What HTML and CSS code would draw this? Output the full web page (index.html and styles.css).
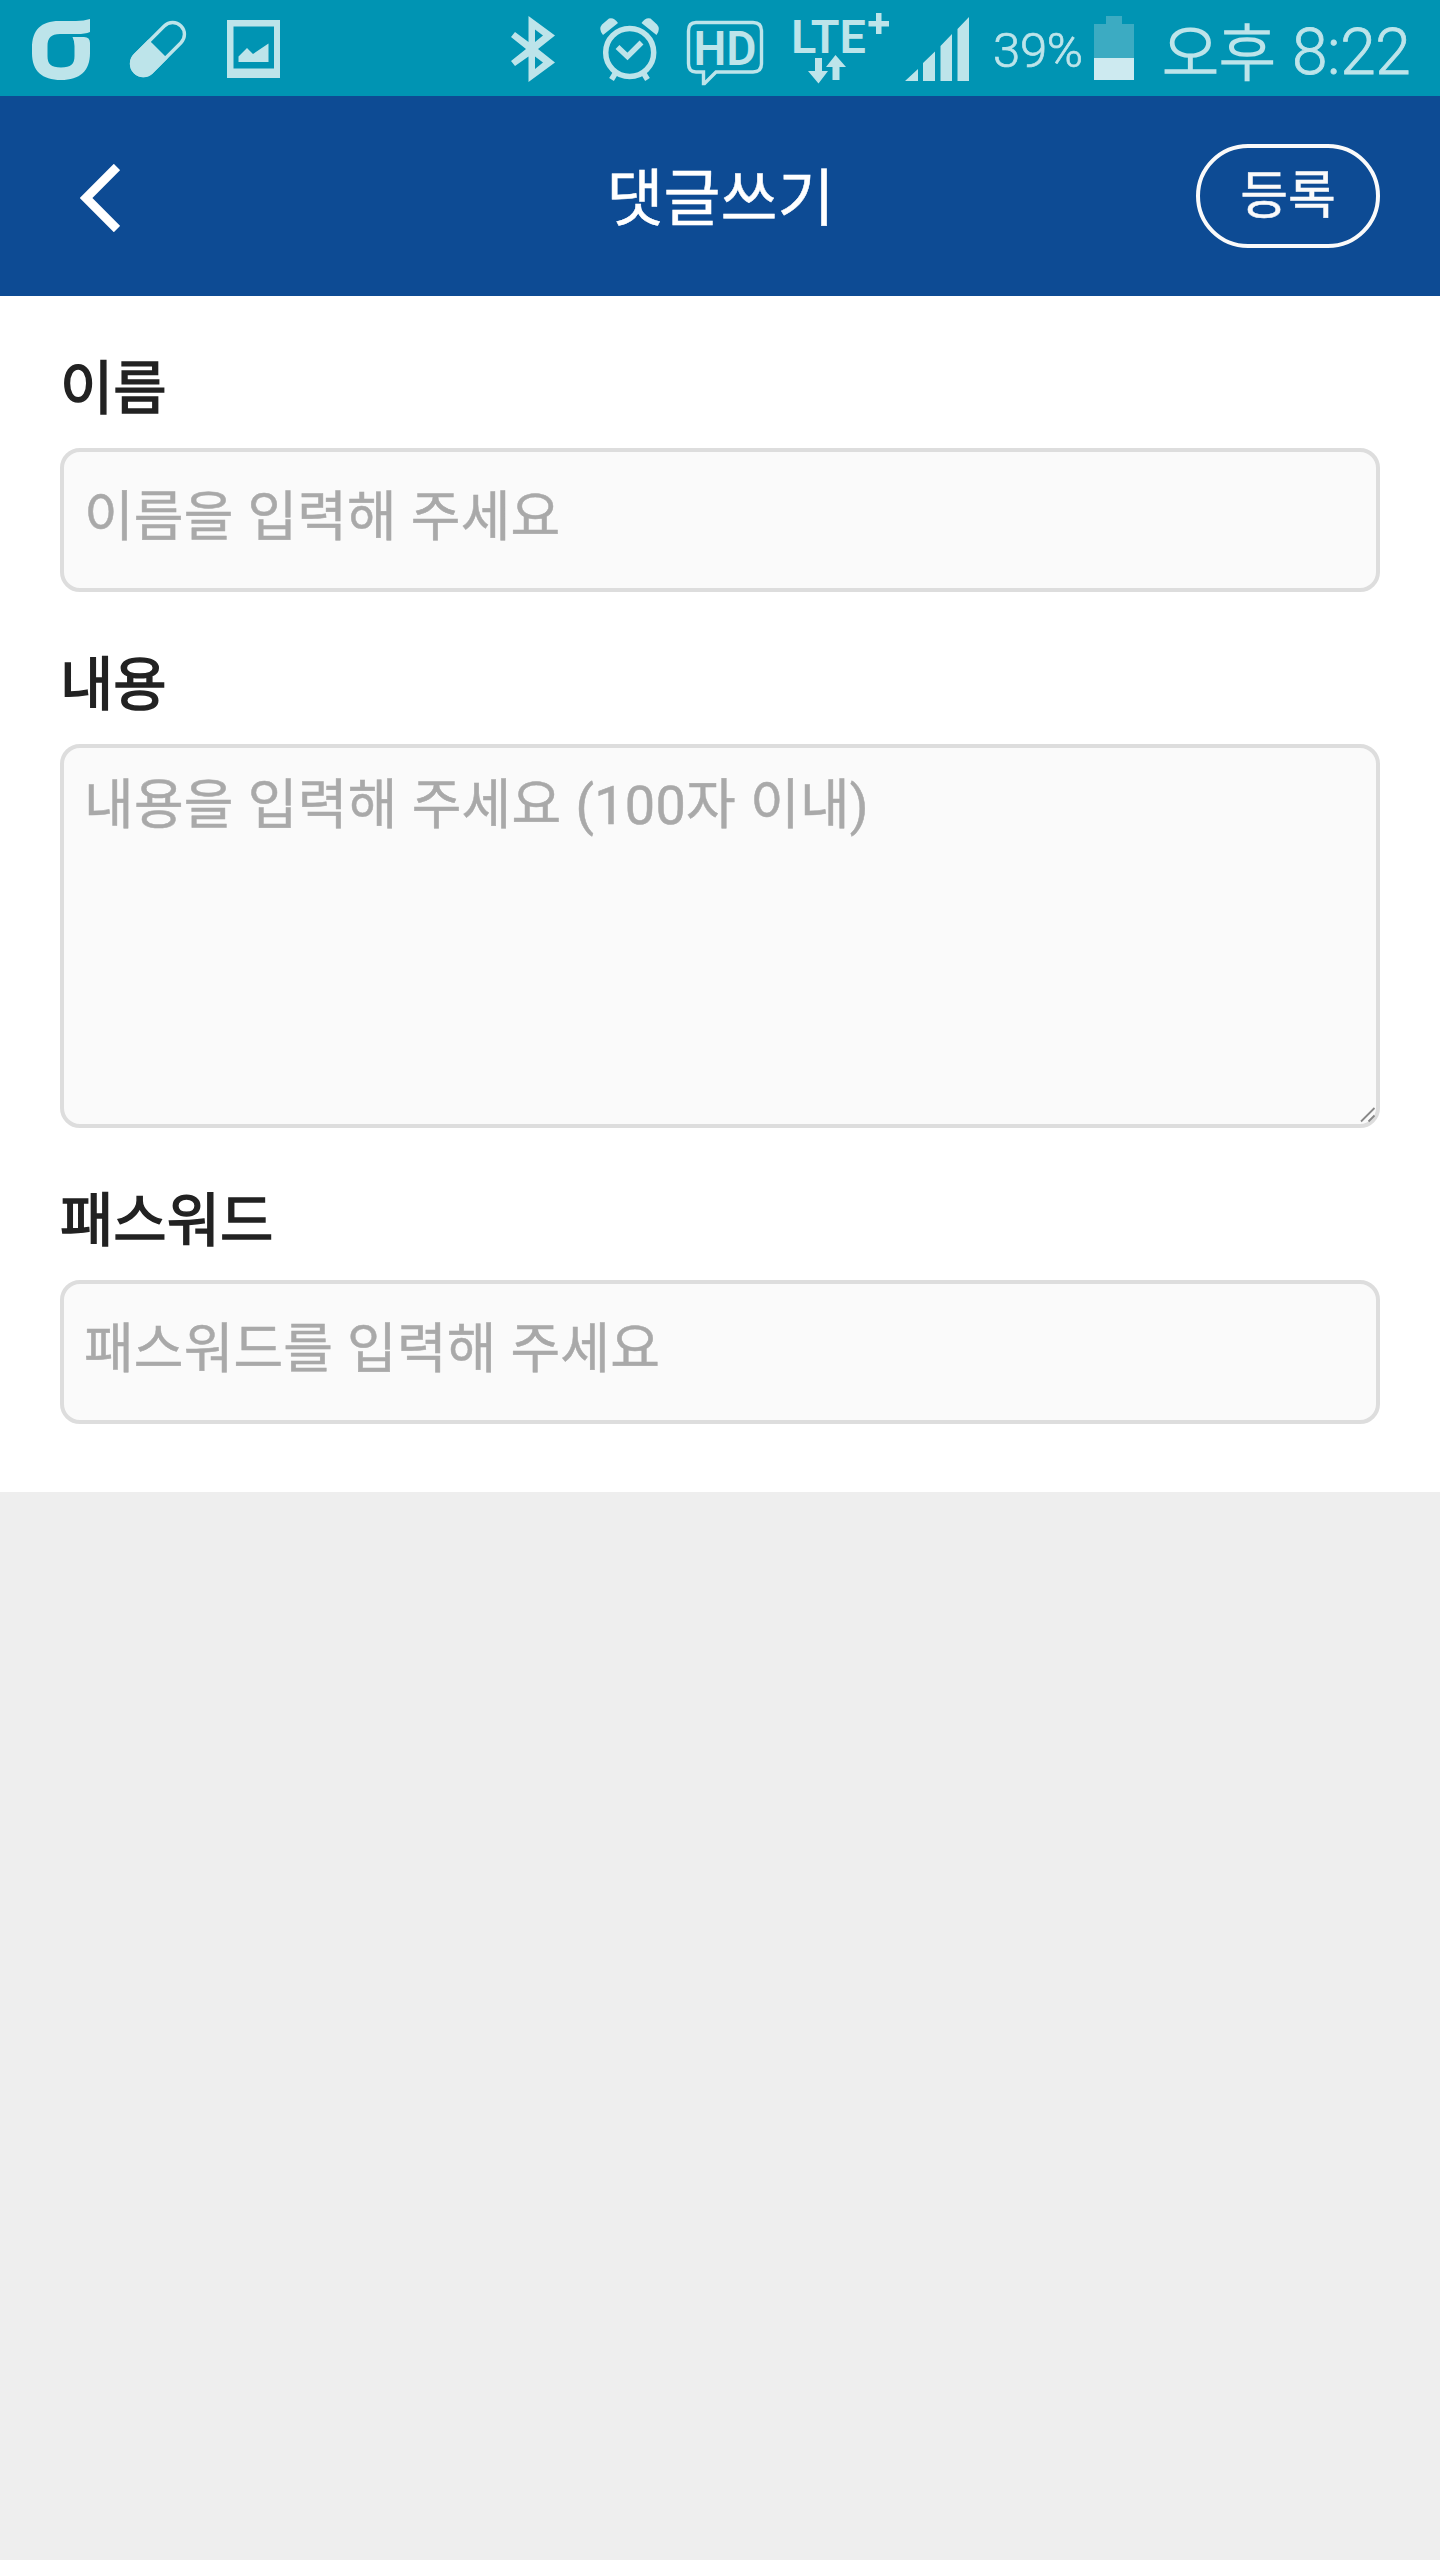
FILE: index.html
```html
<!DOCTYPE html>
<html lang="ko">
<head>
    <meta charset="UTF-8">
    <meta name="viewport" content="width=device-width, initial-scale=1.0">
    <title>댓글쓰기</title>
    <link rel="stylesheet" href="styles.css">
</head>
<body>
    <div class="status-bar">
        <div class="status-left">
            <svg class="icon" width="58" height="96" viewBox="32 0 58 96">
                <path fill-rule="evenodd" d="M90 19V32Q85 34 77 34H60C51 34 47.500 38 47.500 46V56C47.500 64 51 67.500 61 67.500S74.500 64 74.500 56V46Q74.500 41 72.500 37H84Q90 37 90 43V53C90 71 80 80 61 80S32 71 32 53V48C32 30 41 21 59 21H76Q84 21 90 19Z"/>
            </svg>
            <svg class="icon" width="56" height="96" viewBox="130 0 56 96">
                <g transform="rotate(45 158 49)">
                    <rect class="line" x="146.200" y="16.500" width="23.600" height="65" rx="11.800" stroke-width="3.400"/>
                    <path d="M144.500 49H171.500V69.700A13.500 13.500 0 0 1 144.500 69.700Z"/>
                </g>
            </svg>
            <svg class="icon picture" width="53" height="96" viewBox="227 0 53 96">
                <path fill-rule="evenodd" d="M227 20H280V78H227ZM233.500 26.500V68.500H274V26.500Z"/>
                <path d="M238.500 62V56.500L247 48L253 54L268.500 43.500V62Z"/>
            </svg>
        </div>
        <div class="status-right">
            <svg class="icon bluetooth" width="44" height="96" viewBox="511 0 44 96">
                <path fill-rule="evenodd" d="M528.500 16L555 35.500L538 49L555 62.500L528.500 82V56.500L515 66L511 61L526 49L511 37L515 32L528.500 42ZM535 29.500V42L543 35.500ZM535 56.500V69L543 62.500Z"/>
            </svg>
            <svg class="icon alarm" width="59" height="96" viewBox="600 0 59 96">
                <circle class="line" cx="629.700" cy="52.500" r="24" stroke-width="5.500"/>
                <path class="line" d="M617.500 47L627.500 56.500L641.500 42.500" stroke-width="5.500"/>
                <path class="line" d="M615.500 73L611.500 79.500M643.500 73L647.500 79.500" stroke-width="5.500"/>
                <path d="M603 35L618 23Q614 17 609 18.500L602 24.500Q598 29 603 35ZM656.500 35L641.500 23Q645.500 17 650.500 18.500L657 24.500Q661 29 656.500 35Z"/>
            </svg>
            <svg class="icon hd" width="76" height="96" viewBox="687 0 76 96">
                <path class="line" d="M696 22.500H753Q761.500 22.500 761.500 31V63.500Q761.500 72 753 72H716L704.500 83.500H703.500V72H696Q688.500 72 688.500 63.500V31Q688.500 22.500 696 22.500Z" stroke-width="3.400"/>
                <text x="693.500" y="65" font-size="48" font-weight="600" textLength="63" lengthAdjust="spacingAndGlyphs">HD</text>
            </svg>
            <svg class="icon lte" width="96" height="96" viewBox="794 0 96 96">
                <text x="791" y="53" font-size="46" font-weight="600" textLength="75" lengthAdjust="spacingAndGlyphs">LTE</text>
                <path d="M876 13H881.500V21H889V26.500H881.500V34H876V26.500H868.500V21H876Z"/>
                <path d="M815 58H822V71H828L818.500 83.500L808 71H815ZM835.500 55L846 67H839.500V80H832.500V67H826Z"/>
            </svg>
            <svg class="icon signal" width="64" height="96" viewBox="905 0 64 96">
                <path d="M905 81L918 69V81ZM923 81V63L935 51.500V81ZM940.500 81V46L952 34V81ZM957.500 81V29L969 17V81Z"/>
            </svg>
            <span class="percent">39%</span>
            <svg class="icon battery" width="40" height="96" viewBox="1094 0 40 96">
                <path class="empty" d="M1094 24H1106V16H1122V24H1134V58H1094Z"/>
                <path class="full" d="M1094 58H1134V80H1094Z"/>
            </svg>
            <span class="time"><span class="ampm">오후</span>8:22</span>
        </div>
    </div>

    <header class="header">
        <button class="back" type="button" aria-label="뒤로">
            <svg width="40" height="68" viewBox="0 0 40 68">
                <path d="M37 3L6 34L37 65" fill="none" stroke="#fff" stroke-width="9"/>
            </svg>
        </button>
        <h1>댓글쓰기</h1>
        <button class="submit" type="submit" form="replyForm">등록</button>
    </header>

    <form class="reply-form" id="replyForm">
        <label for="name">이름</label>
        <input type="text" id="name" name="name" placeholder="이름을 입력해 주세요">

        <label for="content">내용</label>
        <div class="textarea-wrap">
            <textarea id="content" name="content" maxlength="100" placeholder="내용을 입력해 주세요 (100자 이내)"></textarea>
            <svg class="grip" width="16" height="16" viewBox="0 0 16 16">
                <path d="M1 14.500L14.500 1M8.500 14.500L14.500 8.500" fill="none" stroke="#888" stroke-width="1.800"/>
            </svg>
        </div>

        <label for="password">패스워드</label>
        <input type="password" id="password" name="password" placeholder="패스워드를 입력해 주세요">
    </form>
</body>
</html>
```
FILE: styles.css
```css
* { box-sizing: border-box; }
body { margin: 0; background-color: #eee; color: #222; font-family: Roboto, "Noto Sans CJK KR", sans-serif; }

/* phone status bar */
.status-bar { display: flex; justify-content: space-between; height: 96px; padding: 0 32px; background-color: #0094b3; color: #bde4ea; }
.status-left, .status-right { display: flex; align-items: center; }
.status-left { gap: 40px; }
.icon { display: block; flex: none; overflow: visible; fill: #bde4ea; }
.icon .line { fill: none; stroke: #bde4ea; }
.icon text { font-family: Roboto, sans-serif; }
.picture { margin-left: 1px; }
.alarm { margin-left: 45px; }
.hd { margin-left: 28px; }
.lte { margin-left: 31px; }
.signal { margin-left: 15px; }
.percent { width: 101px; margin-left: 24px; padding-top: 6px; font-size: 49px; font-weight: 300; line-height: 92px; letter-spacing: -0.3px; white-space: nowrap; -webkit-text-stroke: 0.7px #bde4ea; }
.battery .empty { fill: #3cabc2; }
.battery .full { fill: #cdeaf0; }
.time { display: flex; width: 247px; margin-left: 27px; padding-top: 9px; font-size: 64px; font-weight: 300; line-height: 100px; letter-spacing: -0.4px; white-space: nowrap; -webkit-text-stroke: 0.8px #bde4ea; }
.ampm { flex: none; width: 130px; margin: -4px 0 0 1px; font-size: 62px; font-family: "Noto Sans CJK KR", sans-serif; -webkit-text-stroke: 1.6px #bde4ea; }

/* title bar */
.header { display: flex; justify-content: space-between; align-items: flex-start; height: 200px; padding: 48px 60px 0; background-color: #0d4b94; color: #fff; }
.header h1 { margin: 0; padding: 4px 0 0 1px; font-size: 62px; font-weight: 400; line-height: 104px; -webkit-text-stroke: 0.5px #fff; }
.header button { border: 0; background: none; color: #fafafa; font-family: inherit; cursor: pointer; }
.back { width: 184px; height: 108px; padding: 20px 20px 20px; text-align: left; }
.back svg { display: block; }
.header .submit { width: 184px; height: 104px; padding: 1px 0 0; border: 4px solid #fafafa; border-radius: 52px; font-size: 52px; line-height: 92px; -webkit-text-stroke: 0.5px #fafafa; }

.reply-form { height: 1196px; padding: 48px 60px 0; background-color: #fff; }
.reply-form label { display: block; height: 104px; padding: 3px 0 0 0; font-size: 58px; line-height: 84px; -webkit-text-stroke: 1.5px #222; }
.reply-form input, .reply-form textarea { display: block; width: 100%; border: 4px solid #ddd; border-radius: 20px; background-color: #fafafa; color: #222; font-family: inherit; font-size: 54px; letter-spacing: 0.15px; word-spacing: 0.4px; outline: none; }
.reply-form input { height: 144px; margin-bottom: 48px; padding: 0 20px 5px; }
.textarea-wrap { position: relative; margin-bottom: 48px; }
.reply-form textarea { height: 384px; padding: 18px 20px 16px; line-height: 80px; letter-spacing: 0.25px; resize: none; }
.grip { position: absolute; right: 4px; bottom: 5px; }
::placeholder { color: #a9a9a9; opacity: 1; -webkit-text-stroke: 0.5px #a9a9a9; }
```
